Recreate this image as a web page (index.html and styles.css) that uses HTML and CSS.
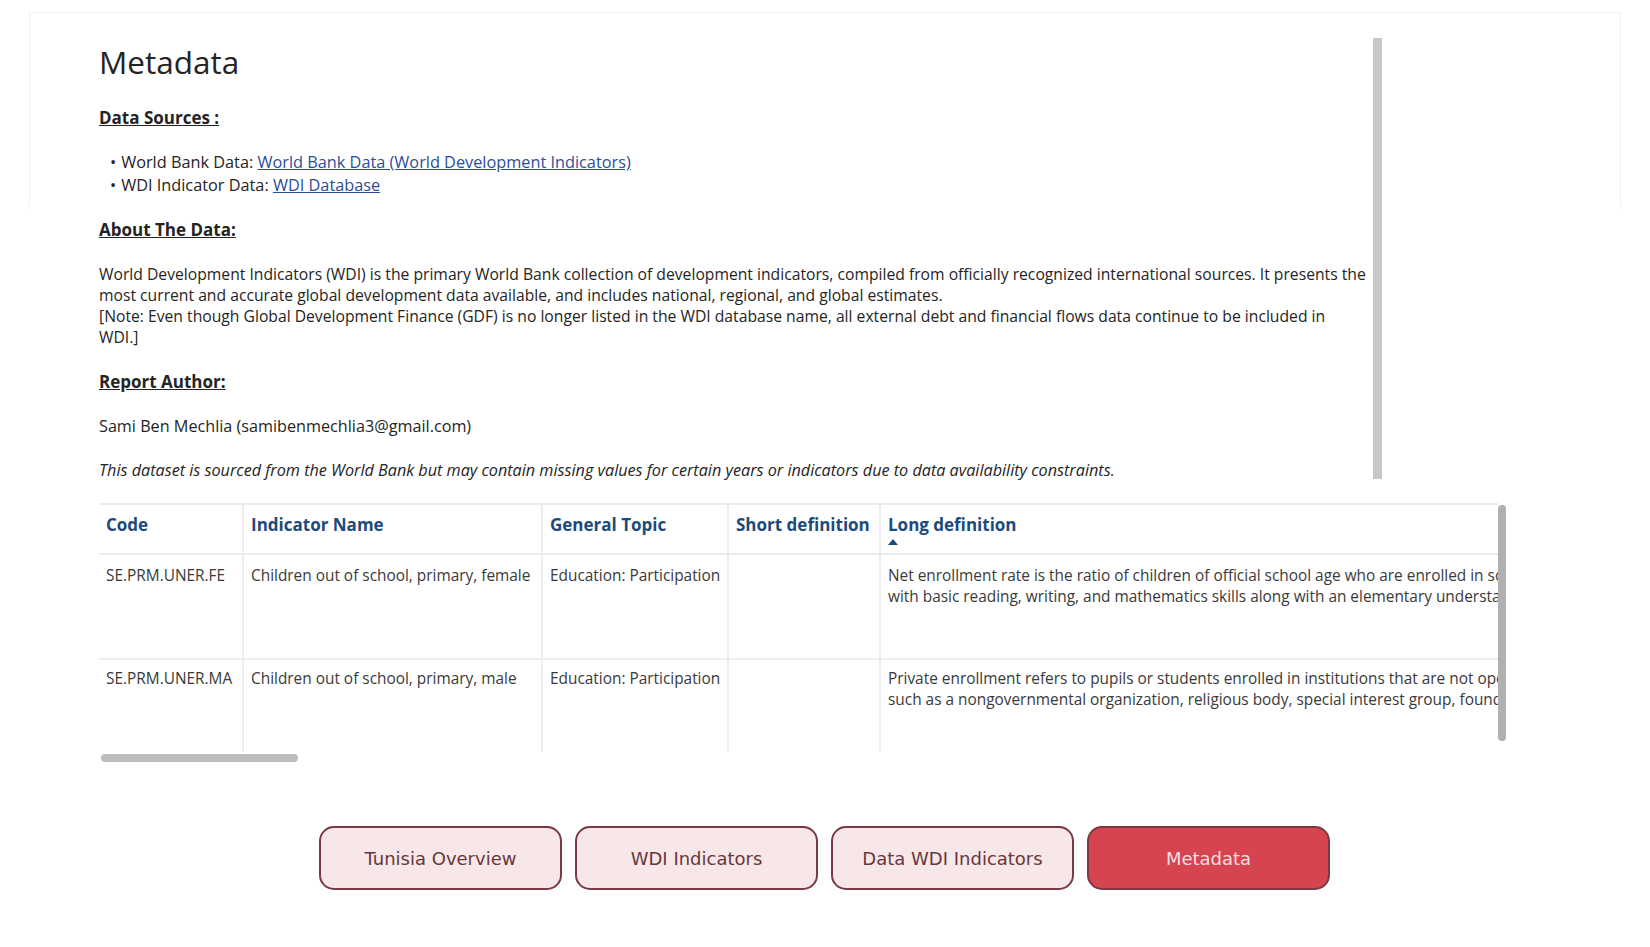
FILE: index.html
```html
<!DOCTYPE html>
<html lang="en">
<head>
<meta charset="utf-8">
<title>Metadata</title>
<link rel="stylesheet" href="styles.css">
</head>
<body>
<div class="frame">
  <section class="meta-panel">
    <div class="meta-content">
      <h1 class="title">Metadata</h1>
      <h2 class="heading first">Data Sources :</h2>
      <ul class="sources">
        <li>World Bank Data: <a href="#">World Bank Data (World Development Indicators)</a></li>
        <li>WDI Indicator Data: <a href="#">WDI Database</a></li>
      </ul>
      <h2 class="heading about">About The Data:</h2>
      <div class="text para">
        <p class="para-line">World Development Indicators (WDI) is the primary World Bank collection of development indicators, compiled from officially recognized international sources. It presents the most current and accurate global development data available, and includes national, regional, and global estimates.</p>
        <p class="para-line note-line">[Note: Even though Global Development Finance (GDF) is no longer listed in the WDI database name, all external debt and financial flows data continue to be included in WDI.]</p>
      </div>
      <h2 class="heading">Report Author:</h2>
      <p class="text body-line">Sami Ben Mechlia (samibenmechlia3@gmail.com)</p>
      <p class="text body-line note">This dataset is sourced from the World Bank but may contain missing values for certain years or indicators due to data availability constraints.</p>
    </div>
    <div class="vscroll"></div>
  </section>

  <section class="table-wrap">
    <div class="table-row">
      <div class="table-view">
        <table class="grid">
          <colgroup>
            <col class="c-code"><col class="c-name"><col class="c-topic"><col class="c-short"><col class="c-long">
          </colgroup>
          <thead>
            <tr>
              <th>Code</th>
              <th>Indicator Name</th>
              <th>General Topic</th>
              <th>Short definition</th>
              <th>Long definition<span class="sort"></span></th>
            </tr>
          </thead>
          <tbody>
            <tr>
              <td class="nw">SE.PRM.UNER.FE</td>
              <td class="nw">Children out of school, primary, female</td>
              <td class="nw">Education: Participation</td>
              <td></td>
              <td><div class="ln">Net enrollment rate is the ratio of children of official school age who are enrolled in school to the population of the corresponding official school age. Primary education provides children</div><div class="ln">with basic reading, writing, and mathematics skills along with an elementary understanding of such subjects as history, geography, natural science, social science, art, and music.</div></td>
            </tr>
            <tr>
              <td class="nw">SE.PRM.UNER.MA</td>
              <td class="nw">Children out of school, primary, male</td>
              <td class="nw">Education: Participation</td>
              <td></td>
              <td><div class="ln">Private enrollment refers to pupils or students enrolled in institutions that are not operated by a public authority but controlled and managed, whether for profit or not, by a private body</div><div class="ln">such as a nongovernmental organization, religious body, special interest group, foundation or business enterprise.</div></td>
            </tr>
          </tbody>
        </table>
      </div>
      <div class="vscroll2"></div>
    </div>
    <div class="hscroll"></div>
  </section>
</div>

<nav class="tabs">
  <button class="tab">Tunisia Overview</button>
  <button class="tab">WDI Indicators</button>
  <button class="tab">Data WDI Indicators</button>
  <button class="tab active">Metadata</button>
</nav>
</body>
</html>
```

FILE: styles.css
```css
* { box-sizing: border-box; }

html, body {
  margin: 0;
  padding: 0;
  background: #ffffff;
}

body {
  font-family: "Open Sans", "Noto Sans", sans-serif;
  color: #252423;
  width: 1650px;
  height: 947px;
  overflow: hidden;
}

.frame {
  margin: 12px 29px 0 29px;
  padding: 25px 0 0 69px;
  border-style: solid;
  border-width: 1px 1px 0 1px;
  border-image: linear-gradient(to bottom, #f1f1f1 0, #f1f1f1 190px, rgba(241,241,241,0) 202px) 1;
}

/* ---------- metadata text panel ---------- */
.meta-panel {
  display: flex;
  width: 1283px;
  height: 441px;
}

.meta-content {
  flex: 1;
  padding-top: 4px;
  padding-right: 1px;
}

.vscroll {
  width: 9px;
  height: 100%;
  background: #c8c8c8;
}

.title {
  margin: 0;
  font-size: 31.5px;
  line-height: 40px;
  font-weight: 400;
  color: #252423;
}

.heading {
  margin: 22px 0 0 0;
  font-size: 17px;
  line-height: 24px;
  font-weight: 700;
  text-decoration: underline;
  color: #252423;
}

.heading.first {
  margin-top: 24px;
}

.heading.about {
  margin-top: 21px;
}

.sources {
  list-style: none;
  margin: 21px 0 0 0;
  padding: 0 0 0 11px;
  font-size: 16.3px;
  line-height: 23px;
}

.sources li::before {
  content: "\2022";
  margin-right: 5px;
}

.sources a {
  color: #2c4c9c;
  text-decoration: underline;
}

.text {
  margin: 22px 0 0 0;
  font-size: 15.7px;
  line-height: 21px;
  color: #252423;
}

.para-line {
  margin: 0;
}

.note-line {
  max-width: 1245px;
}

.body-line {
  font-size: 16.2px;
}

.note {
  margin-top: 23px;
  font-style: italic;
}

/* ---------- table ---------- */
.table-wrap {
  margin-top: 24px;
}

.table-row {
  display: flex;
  align-items: flex-start;
}

.table-view {
  width: 1399px;
  height: 249px;
  overflow: hidden;
  border-top: 2px solid #ededed;
}

.vscroll2 {
  width: 8px;
  height: 236px;
  margin-top: 2px;
  background: #b0b0b0;
  border-radius: 4px;
}

.hscroll {
  width: 197px;
  height: 8px;
  margin: 2px 0 0 2px;
  background: #bdbdbd;
  border-radius: 4px;
}

.grid {
  border-collapse: collapse;
  table-layout: fixed;
  width: 2400px;
  font-size: 15.4px;
  color: #3a3a3a;
}

.c-code { width: 144px; }
.c-name { width: 299px; }
.c-topic { width: 186px; }
.c-short { width: 152px; }
.c-long { width: 1619px; }

.grid th,
.grid td {
  text-align: left;
  vertical-align: top;
  padding: 9px 7px 0 7px;
  border-left: 2px solid #ededed;
}

.grid th:first-child,
.grid td:first-child {
  border-left: 0;
}

.grid th {
  height: 49px;
  font-size: 17px;
  line-height: 22px;
  font-weight: 700;
  color: #1d4a7c;
  border-bottom: 2px solid #ededed;
}

.sort {
  display: block;
  width: 0;
  height: 0;
  margin-top: 3px;
  border-left: 5px solid transparent;
  border-right: 5px solid transparent;
  border-bottom: 6px solid #1d4a7c;
}

.grid td {
  height: 105px;
  line-height: 21px;
  padding-top: 10px;
  border-bottom: 2px solid #ededed;
}

.grid td.nw {
  white-space: nowrap;
  overflow: hidden;
  padding-right: 2px;
}

.grid tbody tr:last-child td {
  padding-top: 8px;
  border-bottom: 0;
}

.ln {
  white-space: nowrap;
}

/* ---------- nav buttons ---------- */
.tabs {
  display: flex;
  justify-content: center;
  gap: 13px;
  margin-top: 64px;
  padding-right: 1px;
}

.tab {
  width: 243px;
  height: 64px;
  border: 2px solid #7a3a40;
  border-radius: 15px;
  background: #f7e7e8;
  color: #6a363b;
  font-family: "DejaVu Sans", Verdana, sans-serif;
  font-size: 18px;
  cursor: pointer;
}

.tab.active {
  background: #d6444f;
  color: #f8dfe1;
}
```
